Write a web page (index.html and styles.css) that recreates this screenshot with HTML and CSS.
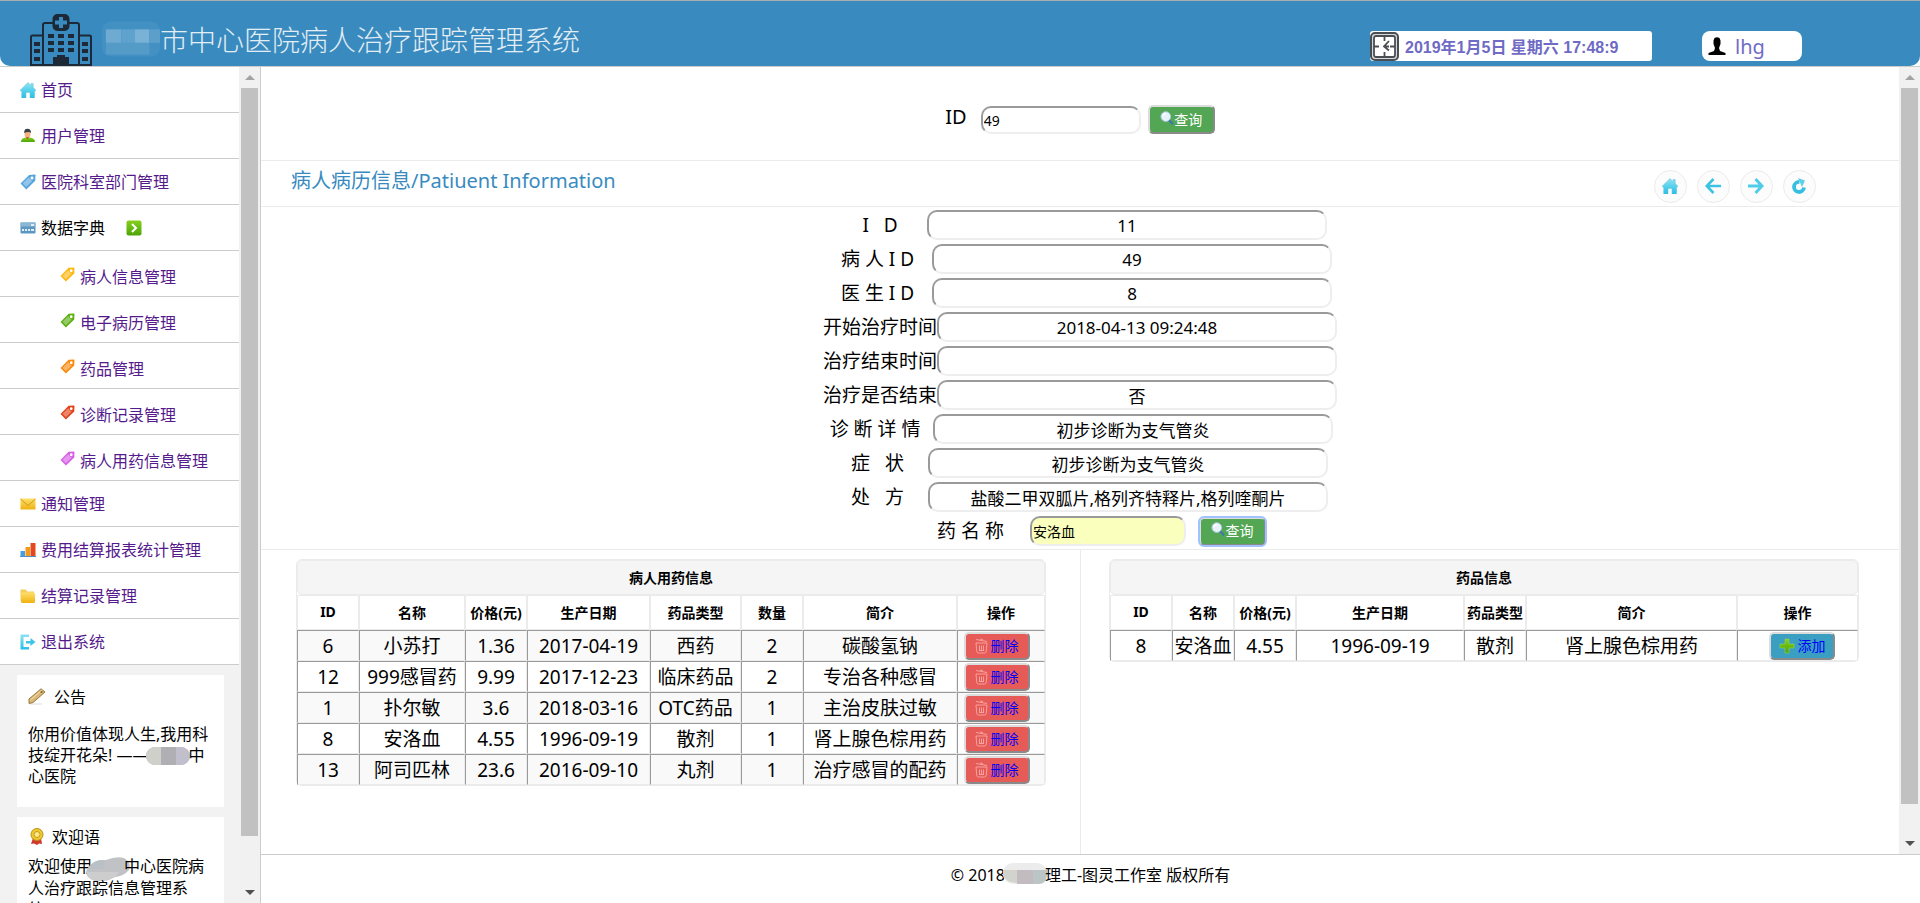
FILE: index.html
```html
<!DOCTYPE html>
<html lang="zh-CN">
<head>
<meta charset="utf-8">
<title>市中心医院病人治疗跟踪管理系统</title>
<link rel="stylesheet" href="styles.css">
</head>
<body>
<svg class="defs" aria-hidden="true">
  <defs>
    <linearGradient id="cyan" x1="0" y1="0" x2="0" y2="1"><stop offset="0" stop-color="#8fe3f3"/><stop offset="1" stop-color="#23bfe6"/></linearGradient>
    <linearGradient id="gold" x1="0" y1="0" x2="0" y2="1"><stop offset="0" stop-color="#ffdf6b"/><stop offset="1" stop-color="#eeb211"/></linearGradient>
    <linearGradient id="green" x1="0" y1="0" x2="0" y2="1"><stop offset="0" stop-color="#86d01f"/><stop offset="1" stop-color="#4ea408"/></linearGradient>
    <symbol id="home" viewBox="0 0 16 16"><path d="M8 0.5L11 3.4V1.5h2.2v4L16 8.3l-1.4.9V16H10v-5.4H6V16H1.7V9.200L0 8.400z" fill="url(#cyan)" stroke="#6bbfd0" stroke-width=".5"/></symbol>
    <symbol id="tag" viewBox="0 0 14 14"><path d="M8 .8L13 .5 13.500 1 13.300 6 5.500 13.500 .5 8.300z" fill="currentColor"/><path d="M7.500 3L2.400 8.200l3 3.200 5.400-5.200z" fill="#fff" opacity=".35"/><circle cx="10.500" cy="3.500" r="1.300" fill="#fff"/></symbol>
    <symbol id="search" viewBox="0 0 14 14"><path d="M9 9l4 4.300" stroke="#3f77a8" stroke-width="2.200"/><circle cx="5.800" cy="5.600" r="4.900" fill="#e6f3fb" stroke="#a3c3d8"/><path d="M3 5a3 3 0 0 1 3-2.500" stroke="#fff" stroke-width="1.500" fill="none"/></symbol>
    <symbol id="trash" viewBox="0 0 13 16"><path d="M1 1.500l11 2M5 1l3 .5M1 5h11l-.8 8.500q-.2 1.500-1.700 1.500h-6Q2 15 1.800 13.500zM4.500 7.500v5M6.500 7.500v5M8.500 7.500v5M4 12.500h5" fill="none" stroke="#f8aaa6" stroke-width=".9"/></symbol>
  </defs>
</svg>

<header class="topbar">
  <svg class="logo" viewBox="0 0 62 52" aria-hidden="true">
    <g fill="none" stroke="#1d2936" stroke-width="2">
      <path d="M1 51V23q0-1.500 1.500-1.500H13V11q0-2 2-2h8M39 9h8q2 0 2 2v10.500h10.500q1.500 0 1.500 1.500v28M13 21v30M49 21v30M0 51h62"/>
      <rect x="23.500" y="1" width="15" height="15" rx="4" fill="#1d2936"/>
    </g>
    <path d="M29 3h4v3.500h4v4h-4V14h-4v-3.500h-4v-4h4z" fill="#398bbf"/>
    <g fill="#1d2936">
      <path d="M18 20h6v4h-6zM28 20h6v4h-6zM38 20h6v4h-6zM18 27h6v4h-6zM28 27h6v4h-6zM38 27h6v4h-6zM18 34h6v4h-6zM28 34h6v4h-6zM38 34h6v4h-6zM4 28h6v4H4zM4 35h6v4H4zM4 43h6v4H4zM52 28h6v4h-6zM52 35h6v4h-6zM52 43h6v4h-6z"/>
      <path d="M23 51v-8h4v-2h8v2h4v8z"/>
    </g>
  </svg>
  <h1 class="brand"><svg class="mask-title" viewBox="0 0 60 36" aria-hidden="true"><rect width="60" height="36" rx="9" fill="#4390c3"/><rect x="4" y="8" width="16" height="14" fill="#6eaad2"/><rect x="20" y="8" width="14" height="14" fill="#5fa2cd"/><rect x="34" y="8" width="15" height="14" fill="#7ab1d6"/><rect x="49" y="8" width="11" height="14" fill="#5c9fcb"/><rect x="4" y="22" width="45" height="12" fill="#559bc8"/></svg>市中心医院病人治疗跟踪管理系统</h1>
  <div class="clock">
    <svg class="clock-icon" viewBox="0 0 29 29" aria-hidden="true"><rect x="1" y="1" width="27" height="27" rx="4" fill="#d6d8da" stroke="#4a4e53" stroke-width="2"/><rect x="4" y="4" width="21" height="21" rx="2" fill="#fff" stroke="#4a4e53" stroke-width="1.800"/><path d="M14.500 4v5M14.500 20v5M4 14.500h5M20 14.500h5M19 9l-5 5.500 5 4M14 14.500h5" fill="none" stroke="#4a4e53" stroke-width="1.800"/></svg>
    <time>2019年1月5日 星期六 17:48:9</time>
  </div>
  <div class="user">
    <svg class="user-icon" viewBox="0 0 18 18" aria-hidden="true"><path d="M6.500 1Q9-.5 11.500 1L12.500 3.500V7L11 11l1 3 5.500 2V18H.5v-2L6 14l1-3-1.500-4V3.500z" fill="#000"/></svg>
    <span>lhg</span>
  </div>
</header>

<div class="shell">
  <aside class="side">
    <div class="side-body">
      <nav>
        <ul class="menu">
          <li><svg class="icon" aria-hidden="true"><use href="#home"/></svg><a href="#">首页</a></li>
          <li><svg class="icon" viewBox="0 0 16 16" aria-hidden="true"><path d="M1 14q0-4 4.500-4.500h4Q15 10 15 14z" fill="url(#green)"/><ellipse cx="7.500" cy="6" rx="3" ry="4" fill="#f0b183"/><path d="M4.200 5Q4 .8 7.500 .8T11 5Q9 2.800 4.200 5z" fill="#3b3f43"/><path d="M6 9l1.500 2.500L9 9z" fill="#d24a2b"/></svg><a href="#">用户管理</a></li>
          <li><svg class="icon tag-blue" aria-hidden="true"><use href="#tag"/></svg><a href="#">医院科室部门管理</a></li>
          <li><svg class="icon" viewBox="0 0 16 16" aria-hidden="true"><rect x=".5" y="2.500" width="15" height="11" rx="1" fill="#5c97c1"/><path d="M.5 2.500h15v4H.5z" fill="#8bb6d4"/><path d="M11 4h3v2h-3zM2 9h2v2H2zM5 9h2v2H5zM8 9h2v2H8zM11 9h3v2h-3z" fill="#e3eff7"/></svg><span>数据字典</span><svg class="icon expand" viewBox="0 0 16 16" aria-hidden="true"><rect x=".5" y=".5" width="15" height="15" rx="2" fill="url(#green)"/><path d="M6 4l4 4-4 4" fill="none" stroke="#fff" stroke-width="2"/></svg></li>
          <li class="sub"><svg class="icon tag-yellow" aria-hidden="true"><use href="#tag"/></svg><a href="#">病人信息管理</a></li>
          <li class="sub"><svg class="icon tag-green" aria-hidden="true"><use href="#tag"/></svg><a href="#">电子病历管理</a></li>
          <li class="sub"><svg class="icon tag-orange" aria-hidden="true"><use href="#tag"/></svg><a href="#">药品管理</a></li>
          <li class="sub"><svg class="icon tag-red" aria-hidden="true"><use href="#tag"/></svg><a href="#">诊断记录管理</a></li>
          <li class="sub"><svg class="icon tag-pink" aria-hidden="true"><use href="#tag"/></svg><a href="#">病人用药信息管理</a></li>
          <li><svg class="icon" viewBox="0 0 16 16" aria-hidden="true"><path d="M.5 2.500h15v11H.5z" fill="url(#gold)"/><path d="M.5 3l7.500 6.500L15.500 3" fill="none" stroke="#cf9a17"/></svg><a href="#">通知管理</a></li>
          <li><svg class="icon" viewBox="0 0 16 16" aria-hidden="true"><path d="M.5 9h4.500v6H.5z" fill="#4a9de0"/><path d="M5.500 5h4.500v10H5.500z" fill="#f39a1d"/><path d="M10.500 1H15.500v14h-5z" fill="#e4481d"/><path d="M0 14.500h16" stroke="#4c8fc9"/></svg><a href="#">费用结算报表统计管理</a></li>
          <li><svg class="icon" viewBox="0 0 16 16" aria-hidden="true"><path d="M.5 13V1.500h5.500l1 2h7V13z" fill="#f3ce5c"/><rect x="1" y="4.500" width="14" height="10.500" rx="1.500" fill="url(#gold)"/></svg><a href="#">结算记录管理</a></li>
          <li><svg class="icon" viewBox="0 0 16 16" aria-hidden="true"><path d="M9 .5H.5v15H9V13H3.500V3H9z" fill="url(#cyan)"/><path d="M6 7h4.500V4L15.500 8l-5 4V9.500H6z" fill="#3fc4e4"/></svg><a href="#">退出系统</a></li>
        </ul>
      </nav>
      <section class="card notice">
        <h2><svg class="card-icon" viewBox="0 0 18 18" aria-hidden="true"><path d="M2 16h12" stroke="#ddd"/><path d="M13 .8l4 3.200L5 14.500 1 15.500V11z" fill="#d9b877" stroke="#9c7a3e"/><path d="M2.500 12L14 2" stroke="#f4e3bb"/><circle cx="13.500" cy="4" r="1" fill="#7b5d2c"/></svg>公告</h2>
        <p>你用价值体现人生,我用科<br>技绽开花朵! ——<svg class="mask" viewBox="0 0 44 18" aria-hidden="true"><rect width="44" height="18" rx="9" fill="#b0b0b4"/><path d="M9 0h6v18H9A9 9 0 0 1 9 0z" fill="#d0d0cb"/><path d="M30 0h5a9 9 0 0 1 0 18h-5z" fill="#c2bfcd"/></svg>中<br>心医院</p>
      </section>
      <section class="card welcome">
        <h2><svg class="card-icon" viewBox="0 0 18 18" aria-hidden="true"><path d="M5 10l-2 6 3-.5 3 1.500 2-1.500 3 .5-1-6z" fill="#cf3a2c"/><circle cx="9" cy="6.500" r="6" fill="#f0c92c" stroke="#b99016"/><circle cx="9" cy="6.500" r="3" fill="#fbe98a" stroke="#c69a1c"/></svg>欢迎语</h2>
        <p>欢迎使用<svg class="mask mask-tall" viewBox="0 0 44 24" aria-hidden="true"><path d="M2 11Q8 2 20 3 30-1 38 1q8 5 5 12-5 6-14 7-8 5-18 4-8-1-10-6-2-4 1-7z" fill="#c1c2c5"/><path d="M2 11Q8 2 18 3v9H1z" fill="#b9c1c7"/><path d="M1 15h32l-4 5q-8 5-18 4-8-1-10-6z" fill="#cdcdcd"/></svg>中心医院病<br>人治疗跟踪信息管理系<br>统</p>
      </section>
    </div>
    <div class="bar" aria-hidden="true"><i class="up"></i><i class="thumb"></i><i class="rest-side"></i><i class="down"></i></div>
  </aside>

  <div class="right">
    <div class="work">
      <main class="content">
        <form class="search">
          <label for="q">ID</label>
          <input class="box short" id="q" type="text" value="49">
          <button class="btn query" type="button"><svg aria-hidden="true"><use href="#search"/></svg>查询</button>
        </form>
        <div class="heading">
          <h2>病人病历信息/Patiuent Information</h2>
          <div class="tools">
            <button type="button" aria-label="首页"><svg aria-hidden="true"><use href="#home"/></svg></button>
            <button type="button" aria-label="后退"><svg viewBox="0 0 16 16" aria-hidden="true"><path d="M8.500 1L1.800 8l6.700 7M2.500 8H16" fill="none" stroke="#3cc3e4" stroke-width="2.600"/></svg></button>
            <button type="button" aria-label="前进"><svg viewBox="0 0 16 16" aria-hidden="true"><path d="M7.500 1L14 8l-6.500 7M0 8h13.500" fill="none" stroke="#4fcde8" stroke-width="3"/></svg></button>
            <button type="button" aria-label="刷新"><svg viewBox="0 0 16 16" aria-hidden="true"><path d="M8.500 4A5 5 0 1 0 13 9.500" fill="none" stroke="#35bfe2" stroke-width="3.800"/><path d="M7 0l7 2.500-3 6.500z" fill="#5ecfe8"/></svg></button>
          </div>
        </div>
        <form class="record">
          <div class="row"><label class="l94" for="f1">I &nbsp; D</label><input class="box" id="f1" type="text" value="11"></div>
          <div class="row"><label class="l104" for="f2">病 人 I D&nbsp;</label><input class="box" id="f2" type="text" value="49"></div>
          <div class="row"><label class="l104" for="f3">医 生 I D&nbsp;</label><input class="box" id="f3" type="text" value="8"></div>
          <div class="row"><label class="l114" for="f4">开始治疗时间</label><input class="box" id="f4" type="text" value="2018-04-13 09:24:48"></div>
          <div class="row"><label class="l114" for="f5">治疗结束时间</label><input class="box" id="f5" type="text" value=""></div>
          <div class="row"><label class="l114" for="f6">治疗是否结束</label><input class="box" id="f6" type="text" value="否"></div>
          <div class="row"><label class="l106" for="f7">诊 断 详 情&nbsp;&nbsp;</label><input class="box" id="f7" type="text" value="初步诊断为支气管炎"></div>
          <div class="row"><label class="l96" for="f8">症 &nbsp; 状&nbsp;</label><input class="box" id="f8" type="text" value="初步诊断为支气管炎"></div>
          <div class="row"><label class="l96" for="f9">处 &nbsp; 方&nbsp;</label><input class="box" id="f9" type="text" value="盐酸二甲双胍片,格列齐特释片,格列喹酮片"></div>
          <div class="row drug"><label for="f10">药 名 称</label><input class="box short filled" id="f10" type="text" value="安洛血"><button class="btn query focused" type="button"><svg aria-hidden="true"><use href="#search"/></svg>查询</button></div>
        </form>
        <div class="tables">
          <section class="pane">
            <table class="grid used">
              <colgroup><col class="c62"><col class="c106"><col class="c62"><col class="c123"><col class="c91"><col class="c62"><col class="c154"><col></colgroup>
              <thead>
                <tr><th class="title" colspan="8">病人用药信息</th></tr>
                <tr><th>ID</th><th>名称</th><th>价格(元)</th><th>生产日期</th><th>药品类型</th><th>数量</th><th>简介</th><th>操作</th></tr>
              </thead>
              <tbody>
                <tr><td>6</td><td>小苏打</td><td>1.36</td><td>2017-04-19</td><td>西药</td><td>2</td><td>碳酸氢钠</td><td class="act"><button class="btn del" type="button"><svg aria-hidden="true"><use href="#trash"/></svg>删除</button></td></tr>
                <tr><td>12</td><td>999感冒药</td><td>9.99</td><td>2017-12-23</td><td>临床药品</td><td>2</td><td>专治各种感冒</td><td class="act"><button class="btn del" type="button"><svg aria-hidden="true"><use href="#trash"/></svg>删除</button></td></tr>
                <tr><td>1</td><td>扑尔敏</td><td>3.6</td><td>2018-03-16</td><td>OTC药品</td><td>1</td><td>主治皮肤过敏</td><td class="act"><button class="btn del" type="button"><svg aria-hidden="true"><use href="#trash"/></svg>删除</button></td></tr>
                <tr><td>8</td><td>安洛血</td><td>4.55</td><td>1996-09-19</td><td>散剂</td><td>1</td><td>肾上腺色棕用药</td><td class="act"><button class="btn del" type="button"><svg aria-hidden="true"><use href="#trash"/></svg>删除</button></td></tr>
                <tr><td>13</td><td>阿司匹林</td><td>23.6</td><td>2016-09-10</td><td>丸剂</td><td>1</td><td>治疗感冒的配药</td><td class="act"><button class="btn del" type="button"><svg aria-hidden="true"><use href="#trash"/></svg>删除</button></td></tr>
              </tbody>
            </table>
          </section>
          <section class="pane">
            <table class="grid stock">
              <colgroup><col class="c62"><col class="c62"><col class="c62"><col class="c168"><col class="c62"><col class="c211"><col></colgroup>
              <thead>
                <tr><th class="title" colspan="7">药品信息</th></tr>
                <tr><th>ID</th><th>名称</th><th>价格(元)</th><th>生产日期</th><th>药品类型</th><th>简介</th><th>操作</th></tr>
              </thead>
              <tbody>
                <tr><td>8</td><td>安洛血</td><td>4.55</td><td>1996-09-19</td><td>散剂</td><td>肾上腺色棕用药</td><td class="act"><button class="btn add" type="button"><svg viewBox="0 0 16 16" aria-hidden="true"><path d="M6 1h4v5h5v4h-5v5H6v-5H1V6h5z" fill="url(#green)" stroke="#9fdc4c" stroke-width=".5"/></svg>添加</button></td></tr>
              </tbody>
            </table>
          </section>
        </div>
      </main>
      <div class="bar" aria-hidden="true"><i class="up"></i><i class="thumb"></i><i class="rest-main"></i><i class="down"></i></div>
    </div>
    <footer class="foot">© 2018<svg class="mask foot-mask" viewBox="0 0 44 22" aria-hidden="true"><rect width="44" height="21" rx="10" fill="#ececec"/><path d="M0 7h14v13Q2 19 0 12z" fill="#d3d3cd"/><path d="M14 7h16v14H14z" fill="#c2bcc1"/><path d="M30 7h14v5q-1 9-8 9h-6z" fill="#bcc5c5"/></svg>理工-图灵工作室 版权所有</footer>
  </div>
</div>
</body>
</html>
```
FILE: styles.css
```css
* { box-sizing: border-box; }
body {
  margin: 0;
  height: 100vh;
  overflow: hidden;
  display: flex;
  flex-direction: column;
  font-family: "Noto Sans", "Noto Sans CJK SC", sans-serif;
  font-size: 16px;
  color: #000;
  background: #fff;
}
h1, h2, p, ul { margin: 0; padding: 0; font-weight: 400; }
input, button { font-family: inherit; margin: 0; }
.defs { position: absolute; width: 0; height: 0; }

/* top bar */
.topbar {
  flex: none;
  height: 66px;
  display: flex;
  align-items: flex-start;
  padding: 0 118px 0 30px;
  border-top: 1px solid #a9adb0;
  border-radius: 0 0 10px 10px;
  background: #398bbf;
}
.logo { width: 62px; height: 52px; margin-top: 13px; }
.brand {
  display: flex;
  align-items: center;
  margin: 18px auto 0 10px;
  font-family: "Noto Sans CJK SC", sans-serif;
  font-size: 28px;
  font-weight: 300;
  line-height: 40px;
  color: #e3edf4;
}
.mask-title { width: 58px; height: 36px; }
.clock, .user {
  height: 30px;
  margin-top: 30px;
  display: flex;
  align-items: center;
  background: #fff;
  color: #6f6bc4;
}
.clock {
  width: 282px;
  gap: 6px;
  border-radius: 3px;
  font: bold 16px "Liberation Sans", "Noto Sans CJK SC", sans-serif;
}
.clock-icon { width: 29px; height: 29px; }
.user { width: 100px; margin-left: 50px; padding-left: 6px; gap: 9px; border-radius: 8px; font-size: 20px; }
.user-icon { width: 18px; height: 18px; }

/* frame */
.shell { flex: 1; min-height: 0; display: flex; border-top: 1px solid #ccc; }
.side { flex: none; width: 261px; display: flex; border-right: 1px solid #ccc; background: #f2f2f2; }
.side-body { flex: 1; overflow: hidden; }
.bar { flex: none; width: 21px; padding: 0 2px; display: flex; flex-direction: column; align-items: center; background: #f1f1f1; }
.bar .up, .bar .down { flex: none; height: 21px; width: 100%; display: flex; align-items: center; justify-content: center; }
.bar .up::before { content: ""; border: 5px solid transparent; border-top: 0; border-bottom-color: #a3a3a3; }
.bar .down::before { content: ""; border: 5px solid transparent; border-bottom: 0; border-top-color: #505050; }
.bar .thumb { flex: 1; width: 100%; background: #c1c1c1; }
.rest-side { height: 46px; }
.rest-main { height: 29px; }

/* side menu */
.menu { list-style: none; background: #fff; }
.menu li { height: 46px; display: flex; align-items: center; gap: 5px; padding-left: 20px; border-bottom: 1px solid #ccc; line-height: 24px; }
.menu .sub { padding: 6px 0 0 60px; }
.menu .sub .icon { width: 15px; height: 15px; margin-bottom: 5px; }
.menu a { color: #551a8b; text-decoration: none; }
.icon { flex: none; width: 16px; height: 16px; }
.expand { margin-left: 16px; }
.tag-blue { color: #56a5dc; }
.tag-yellow { color: #fdb713; }
.tag-green { color: #5cb012; }
.tag-orange { color: #fb8a10; }
.tag-red { color: #e2421a; }
.tag-pink { color: #d75fe6; }
.card { margin: 10px 15px 0 17px; padding: 10px 11px; background: #fff; line-height: 21px; white-space: nowrap; }
.card h2 { display: flex; align-items: center; gap: 8px; font-size: 16px; line-height: 24px; }
.card-icon { width: 18px; height: 18px; }
.notice { height: 132px; }
.notice p { margin-top: 15px; }
.welcome { height: 132px; padding-top: 8px; }
.welcome h2 { gap: 6px; }
.welcome p { margin-top: 7px; }
.mask { width: 44px; height: 18px; margin: 0 -2px; vertical-align: -4px; }
.mask-tall { height: 24px; margin: -3px -6px; vertical-align: -6px; }

/* work area */
.right { flex: 1; min-width: 0; display: flex; flex-direction: column; }
.work { flex: 1; min-height: 0; display: flex; }
.content { flex: 1; min-width: 0; display: flex; flex-direction: column; }
.search { height: 94px; display: flex; align-items: flex-start; justify-content: center; padding-top: 38px; border-bottom: 1px solid #ebebeb; }
.search label { font-size: 20px; line-height: 24px; margin-right: 14px; }
.search .box { width: 160px; height: 28px; margin: 1px 7px 0 0; }
.box { width: 400px; height: 30px; padding: 0 1px; border: 2px solid; border-color: #9a9a9a #eee #eee #9a9a9a; border-radius: 10px; background: #fff; color: #000; font-size: 17px; text-align: center; }
.box.short { font-size: 14px; text-align: left; }
.box.filled { width: 156px; background: #faffbd; }
.btn { display: inline-flex; align-items: center; justify-content: center; padding: 0; border: 2px solid; border-color: #dcdcdc #8a8a8a #8a8a8a #dcdcdc; border-radius: 5px; font-size: 14px; line-height: 20px; }
.query { width: 67px; height: 29px; background: #53a653; color: #fff; }
.query svg { width: 14px; height: 14px; margin-bottom: 4px; }
.query.focused { outline: 2px solid #a0c3ff; outline-offset: -1px; }
.heading { height: 46px; display: flex; align-items: flex-start; justify-content: space-between; padding: 0 83px 0 30px; border-bottom: 1px solid #ebebeb; }
.heading h2 { margin-top: 6px; font-size: 20px; line-height: 28px; color: #398bbf; }
.tools { display: flex; gap: 10px; margin-top: 9px; }
.tools button { width: 33px; height: 33px; padding: 0 1px 2px 0; display: flex; align-items: center; justify-content: center; border: 1px solid #ebebeb; border-radius: 50%; background: #fcfcfc; }
.tools svg { width: 16px; height: 16px; }
.record { display: flex; flex-direction: column; gap: 4px; padding: 3px 0; border-bottom: 1px solid #ebebeb; }
.row { display: flex; align-items: center; justify-content: center; }
.row label { font-size: 19px; line-height: 28px; text-align: center; white-space: nowrap; }
.l94 { width: 94px; }
.l96 { width: 96px; }
.l104 { width: 104px; }
.l106 { width: 106px; }
.l114 { width: 114px; }
.drug { padding-left: 43px; }
.drug .filled { margin: 0 13px 0 26px; }

/* tables */
.tables { flex: 1; min-height: 0; display: flex; }
.pane { flex: none; width: 50%; padding: 9px 34px 0 35px; }
.pane + .pane { padding: 9px 40px 0 28px; border-left: 1px solid #ebebeb; }
.grid { width: 100%; table-layout: fixed; border-collapse: separate; border-spacing: 0; border: 1px solid #ebebeb; border-radius: 6px; }
.grid th { height: 35px; padding: 0 0 2px; border: 1px solid #ebebeb; font-size: 14px; font-weight: 700; white-space: nowrap; }
.grid .title { border-radius: 5px; background: #f5f5f5; }
.grid td { height: 31px; padding: 0; border: 1px solid; border-color: #999 #ebebeb #ebebeb #999; font-size: 19px; line-height: 28px; text-align: center; white-space: nowrap; }
.grid tbody tr:nth-child(odd) { background: #f9f9f9; }
.stock tbody tr:nth-child(odd) { background: #fff; }
.c62 { width: 62px; }
.c91 { width: 91px; }
.c106 { width: 106px; }
.c123 { width: 123px; }
.c154 { width: 154px; }
.c168 { width: 168px; }
.c211 { width: 211px; }
.del, .add { width: 66px; height: 28px; gap: 3px; color: #00f; vertical-align: top; }
.del { background: #e65a57; }
.del svg { width: 13px; height: 16px; }
.add { background: #3a9fc0; }
.add svg { width: 16px; height: 16px; }
.grid.used .act { padding-right: 9px; }
.grid.stock .act { padding-left: 9px; }

.foot { flex: none; height: 49px; padding-top: 8px; border-top: 1px solid #ccc; text-align: center; line-height: 24px; }
.foot-mask { height: 22px; }
```
